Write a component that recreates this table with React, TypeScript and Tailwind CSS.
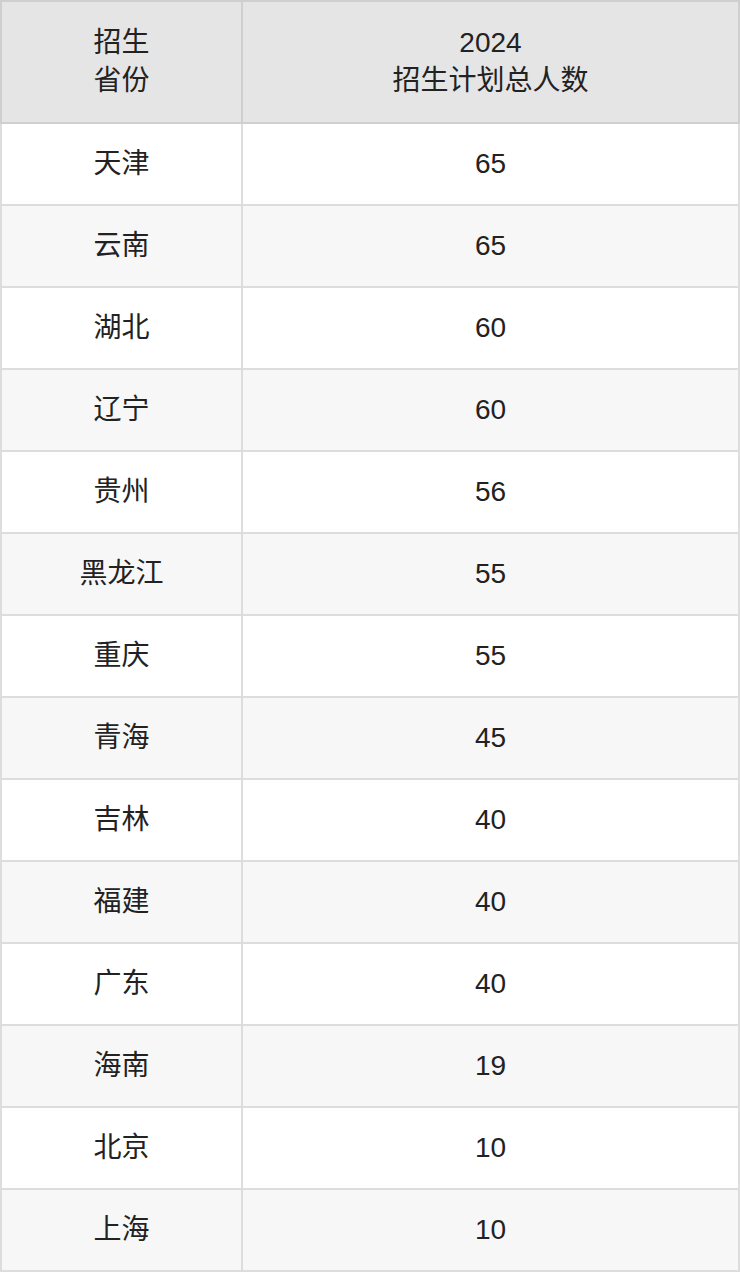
import React from "react";

const rows: [string, string][] = [
  ["天津", "65"],
  ["云南", "65"],
  ["湖北", "60"],
  ["辽宁", "60"],
  ["贵州", "56"],
  ["黑龙江", "55"],
  ["重庆", "55"],
  ["青海", "45"],
  ["吉林", "40"],
  ["福建", "40"],
  ["广东", "40"],
  ["海南", "19"],
  ["北京", "10"],
  ["上海", "10"],
];

export default function App() {
  return (
    <div
      className="w-[740px] bg-white text-[#222222] text-[28px] leading-[38px]"
      style={{ fontFamily: '"Liberation Sans", "Noto Sans CJK SC", sans-serif' }}
    >
      <div className="flex">
        <div className="w-[243px] h-[124px] border-2 border-[#cfcfcf] bg-[#e5e5e5] flex flex-col items-center justify-center text-center">
          <div>招生</div>
          <div>省份</div>
        </div>
        <div className="w-[497px] h-[124px] border-t-2 border-r-2 border-b-2 border-[#cfcfcf] bg-[#e5e5e5] flex flex-col items-center justify-center text-center">
          <div>2024</div>
          <div>招生计划总人数</div>
        </div>
      </div>
      {rows.map(([p, n], i) => (
        <div key={p} className={`flex ${i % 2 === 1 ? "bg-[#f7f7f7]" : "bg-white"}`}>
          <div className="w-[243px] h-[82px] border-l-2 border-r-2 border-b-2 border-[#dddddd] flex items-center justify-center">
            {p}
          </div>
          <div className="w-[497px] h-[82px] border-r-2 border-b-2 border-[#dddddd] flex items-center justify-center">
            {n}
          </div>
        </div>
      ))}
    </div>
  );
}
